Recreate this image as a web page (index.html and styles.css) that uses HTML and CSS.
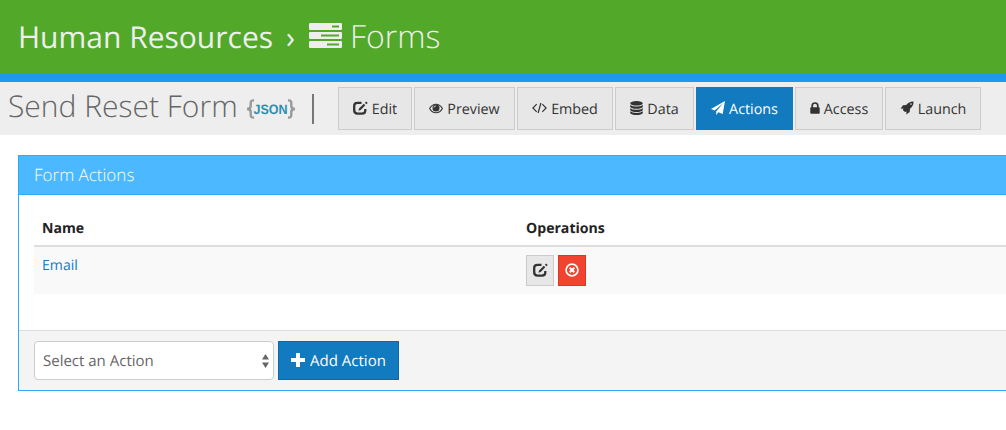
FILE: index.html
```html
<!DOCTYPE html>
<html lang="en">
<head>
<meta charset="utf-8">
<title>Form Actions</title>
<link rel="stylesheet" href="styles.css">
</head>
<body>
<header class="site-header">
  <span class="crumb">Human Resources</span>
  <span class="crumb-sep">›</span>
  <svg class="server-icon" viewBox="0 0 33 26" width="33" height="26">
    <path fill="#eee" fill-rule="evenodd" d="M1 0h31q1 0 1 1v5q0 1-1 1H1q-1 0-1-1V1q0-1 1-1zM23 2.500v2h7v-2zM1 9h31q1 0 1 1v5q0 1-1 1H1q-1 0-1-1v-5q0-1 1-1zM12 11.500v2h18v-2zM1 18h31q1 0 1 1v5q0 1-1 1H1q-1 0-1-1v-5q0-1 1-1zM18 20.500v2h12v-2z"/>
  </svg>
  <h1 class="crumb-current">Forms</h1>
</header>
<nav class="toolbar">
  <h2 class="form-title">Send Reset Form</h2>
  <svg class="json-icon" viewBox="0 0 48 22" width="48" height="22">
    <g fill="none" stroke="#999" stroke-width="2.400"><path d="M7 2.500Q3.700 2 3.700 5v3Q3.700 11 0 11Q3.700 11 3.700 14v3Q3.700 20 7 19.500"/><path d="M41 2.500Q44.300 2 44.300 5v3Q44.300 11 48 11Q44.300 11 44.300 14v3Q44.300 20 41 19.500"/></g>
    <text class="json-text" x="6.500" y="15.800" textLength="34" lengthAdjust="spacingAndGlyphs">JSON</text>
  </svg>
  <span class="bar"></span>
  <div class="tabs">
    <a class="btn edit"><svg viewBox="0 0 15 14" width="15" height="14"><path d="M8.500 1.800H4.500Q1.200 1.800 1.200 4.800V9.300Q1.200 12.600 4.500 12.600H9Q12.300 12.600 12.300 9.500V8" fill="none" stroke="currentColor" stroke-width="2.300"/><path d="M5.500 9.700L6 7.500 10.800 2.700 12.300 4.200 7.700 8.900zM11.900 1.700L13.200.4 14.700 1.900 13.400 3.200z" fill="currentColor"/></svg><span>Edit</span></a>
    <a class="btn preview"><svg viewBox="0 0 14 11" width="14" height="11"><path d="M.6 5.500Q3 1.200 7 1.200T13.400 5.500Q11 9.800 7 9.800T.6 5.500z" fill="none" stroke="currentColor" stroke-width="1.100"/><circle cx="7" cy="4.900" r="3.500" fill="currentColor"/><path d="M5 4.700Q5 2.900 6.900 2.900" fill="none" stroke="#e6e6e6" stroke-width=".8"/></svg><span>Preview</span></a>
    <a class="btn embed"><svg viewBox="0 0 15 12" width="15" height="12"><path d="M4.700 2.200L.9 6l3.800 3.800M10.300 2.200L14.100 6l-3.800 3.800M8.900 1L6.100 11" fill="none" stroke="currentColor" stroke-width="1.200"/></svg><span>Embed</span></a>
    <a class="btn data"><svg viewBox="0 0 13 14" width="13" height="14"><ellipse cx="6.500" cy="2.300" rx="6.300" ry="2.300" fill="currentColor"/><path d="M.2 4Q2 5.600 6.500 5.600T12.800 4V6Q11.500 7.800 6.500 7.800T.2 6zM.2 7.200Q2 8.800 6.500 8.800T12.800 7.200V8.900Q11.500 10.900 6.500 10.900T.2 8.900zM.2 10.300Q2 11.900 6.500 11.900T12.800 10.300V11.900Q11.500 14 6.500 14T.2 11.900z" fill="currentColor"/></svg><span>Data</span></a>
    <a class="btn actions primary"><svg viewBox="0 0 14 14" width="14" height="14"><path d="M14 0L11.700 13 7.500 11.200 5.200 14V10.400L12 2.200 3.700 9.500 0 8z" fill="currentColor"/></svg><span>Actions</span></a>
    <a class="btn access"><svg viewBox="0 0 10 12" width="10" height="12"><path d="M2.200 6V3.800A2.800 2.800 0 0 1 7.800 3.800V6" fill="none" stroke="currentColor" stroke-width="1.700"/><rect x=".3" y="5.200" width="9.400" height="6.600" rx=".8" fill="currentColor"/></svg><span>Access</span></a>
    <a class="btn launch"><svg viewBox="0 0 14 14" width="14" height="14"><path fill-rule="evenodd" d="M13.500.5Q9 .3 6.200 4L3 4.300.5 7.700 3.400 7.500 2.800 8.900 5 11.100 6.500 10.600 6.300 13.500 9.700 11 10 7.800Q13.700 5 13.500.5zM11 2.300A.8.8 0 1 1 11 3.900A.8.8 0 1 1 11 2.300z" fill="currentColor"/></svg><span>Launch</span></a>
  </div>
</nav>
<main class="panel">
  <h3 class="panel-head"><span>Form Actions</span></h3>
  <div class="panel-body">
    <div class="row head"><div class="name">Name</div><div>Operations</div></div>
    <div class="row item">
      <div class="name"><a class="link">Email</a></div>
      <div class="ops">
        <a class="op"><svg viewBox="0 0 15 14" width="15" height="14"><path d="M8.500 1.800H4.500Q1.200 1.800 1.200 4.800V9.300Q1.200 12.600 4.500 12.600H9Q12.300 12.600 12.300 9.500V8" fill="none" stroke="currentColor" stroke-width="2.300"/><path d="M5.500 9.700L6 7.500 10.800 2.700 12.300 4.200 7.700 8.900zM11.900 1.700L13.200.4 14.700 1.900 13.400 3.200z" fill="currentColor"/></svg></a>
        <a class="op danger"><svg viewBox="0 0 14 14" width="14" height="14"><circle cx="7" cy="7" r="5.900" fill="none" stroke="currentColor" stroke-width="1.700"/><path d="M4.700 4.700l4.600 4.600M9.300 4.700L4.700 9.300" stroke="currentColor" stroke-width="2"/></svg></a>
      </div>
    </div>
  </div>
  <footer class="panel-foot">
    <div class="select"><span>Select an Action</span><svg viewBox="0 0 7 14" width="7" height="14"><path d="M0 5.500L3.500 0 7 5.500zM0 8.500H7L3.500 14z" fill="#666"/></svg></div>
    <a class="add"><svg viewBox="0 0 14 14" width="14" height="14"><path d="M5 0h4v5h5v4H9v5H5V9H0V5h5z" fill="#fff"/></svg><span>Add Action</span></a>
  </footer>
</main>
</body>
</html>
```

FILE: styles.css
```css
* { box-sizing: border-box; }
body {
  margin: 0;
  height: 430px;
  overflow: hidden;
  background: #fff;
  color: #222;
  font: 15px/20px "Open Sans", sans-serif;
  text-rendering: geometricPrecision;
}
h1, h2, h3 { margin: 0; }
svg { flex: none; display: block; }
span, h1, h2 { white-space: nowrap; }
.site-header {
  display: flex;
  align-items: center;
  height: 82px;
  padding: 0 0 2px 18px;
  background: #52a829;
  border-bottom: 8px solid #1b9af0;
  color: #eee;
  font-size: 30px;
  line-height: 40px;
}
.crumb { width: 268px; padding-top: 2px; }
.crumb-sep { width: 23px; padding-top: 2px; }
.server-icon { margin-right: 8px; }
.crumb-current { padding-top: 1px; font-size: 32px; font-weight: 300; }
.toolbar {
  display: flex;
  align-items: center;
  height: 53px;
  padding-left: 8px;
  background: #eee;
}
.form-title {
  width: 239px;
  padding-bottom: 5px;
  font-size: 30px;
  font-weight: 300;
  line-height: 40px;
  color: #666;
}
.json-text {
  font: bold 13.500px "Liberation Sans", sans-serif;
  fill: #2a8fb0;
}
.bar { width: 2px; height: 30px; margin: 0 24px 0 17px; background: #777; }
.tabs { display: flex; gap: 2px; font-size: 14.300px; }
.btn {
  display: flex;
  align-items: center;
  justify-content: center;
  gap: 4px;
  height: 43px;
  border: 1px solid #ccc;
  background: #e7e7e7;
  color: #333;
}
.btn span { padding-top: 2px; }
.btn svg { margin-bottom: 1px; }
.edit { width: 74px; }
.preview { width: 101px; }
.embed { width: 96px; }
.data { width: 79px; }
.actions { width: 97px; }
.access { width: 88px; }
.launch { width: 96px; }
.primary { background: #127abe; border-color: #127abe; color: #fff; }
.panel {
  height: 236px;
  margin: 20px 0 0 18px;
  border: 1px solid #2fabf7;
  border-right: 0;
}
.panel-head {
  height: 39px;
  padding: 9px 15px;
  background: #4bb8ff;
  border-bottom: 1px solid #2fabf7;
  color: #fff;
  font-size: 17px;
  font-weight: 300;
  line-height: 20px;
}
.panel-body { height: 135px; padding: 15px 0 15px 15px; }
.row { display: flex; padding: 8px; font-size: 14.100px; line-height: 21px; }
.name { width: 484px; }
.head { height: 37px; border-bottom: 2px solid #ddd; font-weight: 700; }
.item { height: 47px; background: #f9f9f9; }
.link { color: #127abe; }
.ops { display: flex; gap: 4px; }
.op {
  display: flex;
  align-items: center;
  justify-content: center;
  width: 28px;
  height: 31px;
  border: 1px solid #ccc;
  background: #e7e7e7;
  color: #333;
}
.op svg { margin-bottom: 1px; }
.danger { background: #f04330; border-color: #dc3725; color: #fff; }
.panel-foot {
  display: flex;
  gap: 4px;
  height: 60px;
  padding: 10px 0 10px 15px;
  border-top: 1px solid #ddd;
  background: #f4f4f4;
}
.select {
  display: flex;
  align-items: center;
  justify-content: space-between;
  width: 240px;
  height: 39px;
  padding: 0 4px 0 8px;
  border: 1px solid #ccc;
  border-radius: 4px;
  background: #fff;
  color: #666;
}
.select span, .add span { padding-top: 1px; }
.add {
  display: flex;
  align-items: center;
  justify-content: center;
  gap: 5px;
  width: 121px;
  height: 39px;
  border: 1px solid #0d6aa6;
  background: #127abe;
  color: #fff;
}
.add svg { margin-bottom: 1px; }
```
